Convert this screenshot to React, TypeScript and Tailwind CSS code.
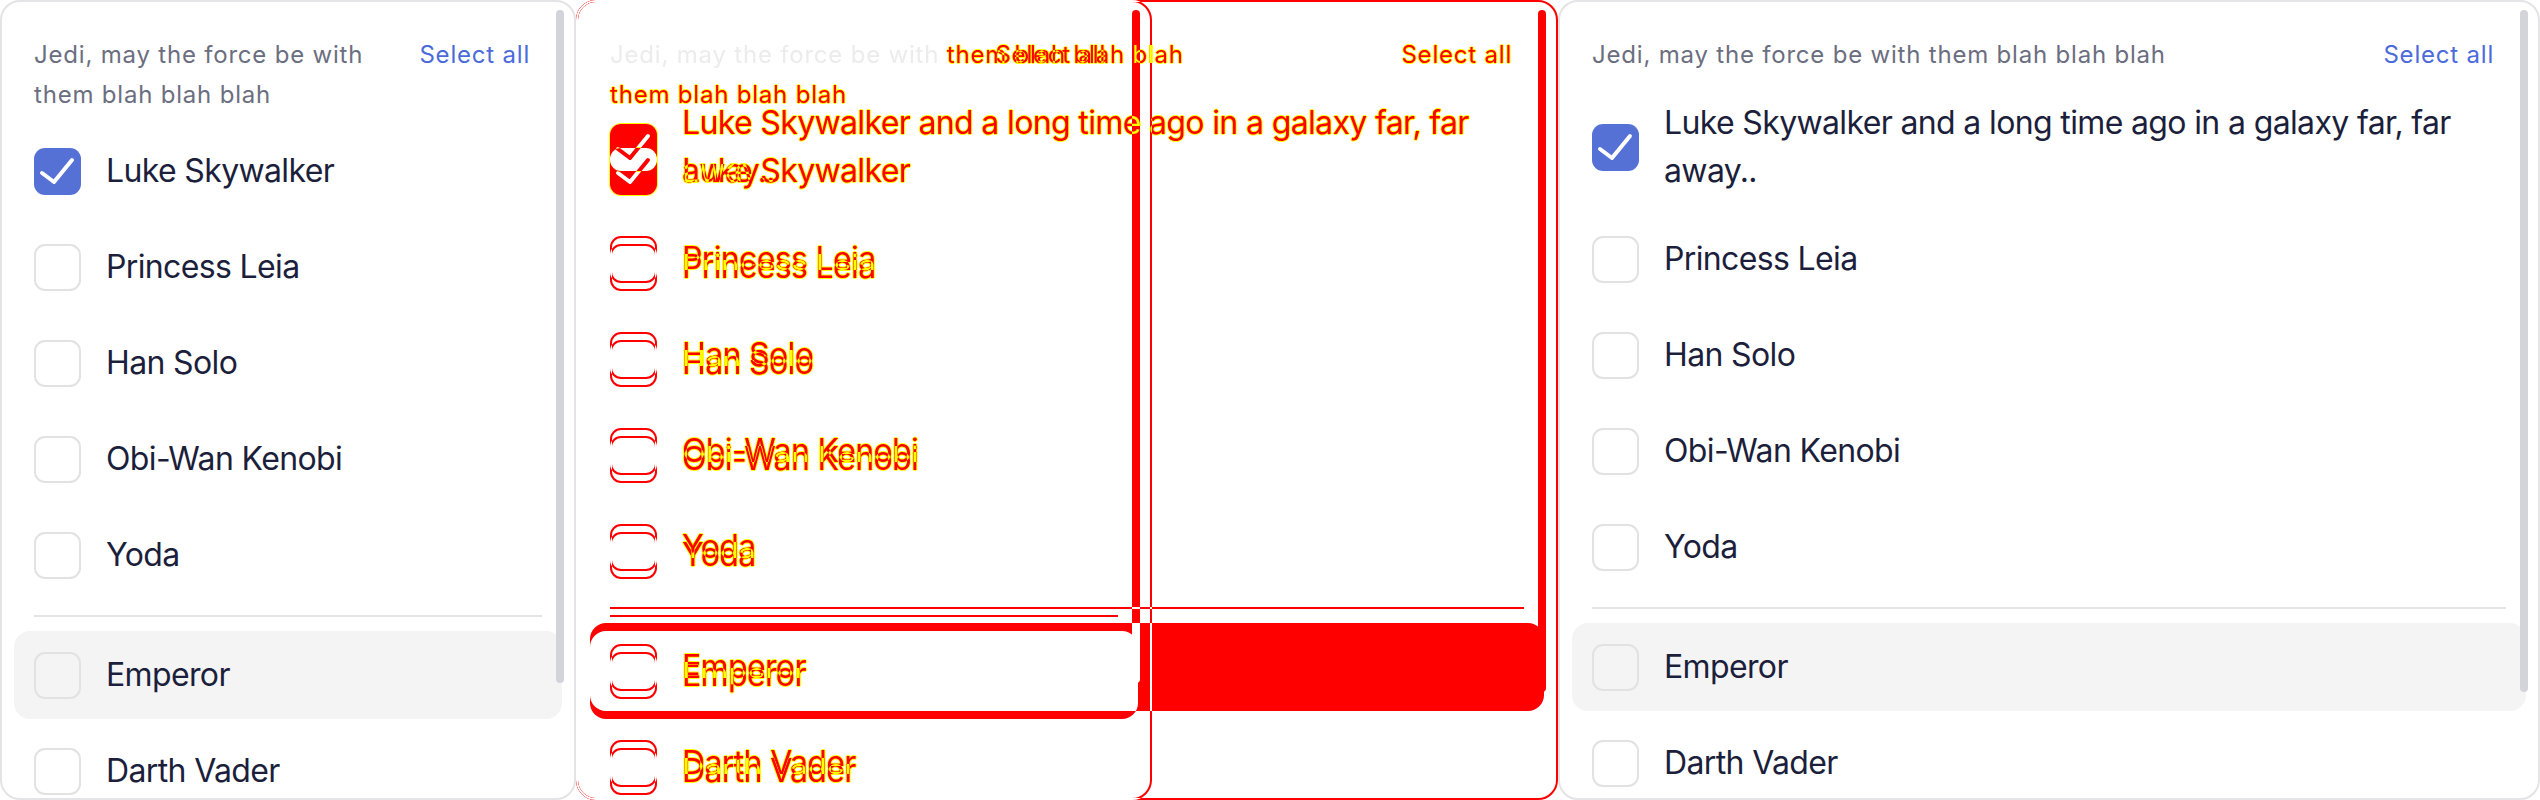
import React from "react";

type Variant = "expected" | "actual";
// normal = plain screenshot; shapes, glyphs and halo are the passes of the diff image
type Mode = "normal" | "shapes" | "glyphs" | "halo";

const crew = ["Princess Leia", "Han Solo", "Obi-Wan Kenobi", "Yoda"];

// yellow anti-alias rim the diff tool paints round changed glyphs
const glow =
  "[text-shadow:1px_0_0_#ffff00,-1px_0_0_#ffff00,0_1px_0_#ffff00,0_-1px_0_#ffff00]";

function textFor(mode: Mode, normal: string) {
  if (mode === "normal") return normal;
  if (mode === "glyphs") return "text-[#00ffff]";
  if (mode === "halo") return `text-transparent ${glow}`;
  return "text-transparent";
}

function CheckMark({ color }: { color: string }) {
  return (
    <svg viewBox="0 0 47 47" className="absolute inset-0 h-full w-full" fill="none">
      <path
        d="M8 25L20 34L38 12"
        stroke={color}
        strokeWidth={4}
        strokeLinecap="round"
        strokeLinejoin="round"
      />
    </svg>
  );
}

function Box({ checked, mode, onFill }: { checked?: boolean; mode: Mode; onFill?: boolean }) {
  if (checked) {
    if (mode === "glyphs") return <span className="block h-[47px] w-[47px] shrink-0" />;
    if (mode === "halo")
      return (
        <span className="block h-[47px] w-[47px] shrink-0 rounded-[11px] shadow-[0_0_0_1px_#ffff00]" />
      );
    return (
      <span
        className={`relative block h-[47px] w-[47px] shrink-0 rounded-[11px] ${
          mode === "shapes" ? "bg-[#00ffff]" : "bg-[#5571d6]"
        }`}
      >
        <CheckMark color={mode === "shapes" ? "#000000" : "#ffffff"} />
      </span>
    );
  }
  let border = "border-[#e2e2e2]";
  if (mode === "shapes") border = onFill ? "border-black" : "border-[#00ffff]";
  if (mode === "glyphs" || mode === "halo") border = "border-transparent";
  return <span className={`block h-[47px] w-[47px] shrink-0 rounded-[11px] border-2 ${border}`} />;
}

function Row({
  children,
  checked,
  hovered,
  mode,
}: {
  children: React.ReactNode;
  checked?: boolean;
  hovered?: boolean;
  mode: Mode;
}) {
  let bg = "";
  if (hovered && mode === "normal") bg = "bg-[#f4f4f5]";
  if (hovered && mode === "shapes") bg = "bg-[#00ffff]";
  return (
    <div
      className={`mb-[8px] flex min-h-[88px] items-center gap-[25px] rounded-[16px] px-[20px] py-[12px] ${bg}`}
    >
      <Box checked={checked} mode={mode} onFill={hovered} />
      <span
        className={`whitespace-nowrap text-[32px] leading-[48px] tracking-[-0.02em] ${textFor(
          mode,
          "text-[#1c1f3b]"
        )}`}
      >
        {children}
      </span>
    </div>
  );
}

function Panel({ variant, mode = "normal" }: { variant: Variant; mode?: Mode }) {
  const wide = variant === "actual";

  // first header line is identical in both shots, so the diff shows it only faintly
  let sameText = "";
  if (mode === "glyphs") sameText = "text-transparent";
  if (mode === "halo") {
    sameText = wide ? "text-transparent [text-shadow:none]" : "text-[#ececec] [text-shadow:none]";
  }

  const frame =
    mode === "normal"
      ? "border-[#e4e4e7] bg-white"
      : mode === "shapes"
      ? "border-[#00ffff]"
      : "border-transparent";
  const line = mode === "normal" ? "bg-[#e4e4e7]" : mode === "shapes" ? "bg-[#00ffff]" : "";
  const thumb = mode === "normal" ? "bg-[#d3d4d9]" : mode === "shapes" ? "bg-[#00ffff]" : "";

  return (
    <div
      className={`relative h-[800px] shrink-0 overflow-hidden rounded-[20px] border-2 ${
        wide ? "w-[982px]" : "w-[576px]"
      } ${frame}`}
    >
      <div className="flex flex-col px-[12px]">
        <div className="mb-[12px] flex items-start justify-between gap-8 pl-[20px] pr-[32px] pt-[33px] text-[24px] leading-[40px] tracking-[0.8px]">
          <p className={`whitespace-nowrap ${textFor(mode, "text-[#6b6e80]")}`}>
            <span className={sameText}>Jedi, may the force be with</span>
            {wide ? " them blah blah blah" : <><br />them blah blah blah</>}
          </p>
          <button className={`shrink-0 whitespace-nowrap ${textFor(mode, "text-[#4b6bdb]")}`}>
            Select all
          </button>
        </div>

        <Row checked mode={mode}>
          {wide ? (
            <>
              Luke Skywalker and a long time ago in a galaxy far, far
              <br />
              away..
            </>
          ) : (
            "Luke Skywalker"
          )}
        </Row>
        {crew.map((name) => (
          <Row key={name} mode={mode}>
            {name}
          </Row>
        ))}

        <div className={`mx-[20px] mb-[14px] mt-[8px] h-[2px] ${line}`} />

        <Row hovered mode={mode}>
          Emperor
        </Row>
        <Row mode={mode}>Darth Vader</Row>
      </div>

      {/* overlay scroll thumb */}
      <div
        className={`absolute right-[10px] top-[8px] w-[8px] rounded-full ${
          wide ? "h-[682px]" : "h-[673px]"
        } ${thumb}`}
      />
    </div>
  );
}

export default function App() {
  return (
    <div className="flex h-[800px] w-[2540px] overflow-hidden bg-white font-[Inter,'Noto_Sans',sans-serif]">
      <Panel variant="expected" />

      {/* diff image: cyan layers xor-ed by difference blending on white, rims laid over by multiply */}
      <div className="relative isolate h-[800px] w-[982px] shrink-0 overflow-hidden bg-white">
        <div className="absolute left-0 top-0 mix-blend-difference">
          <Panel variant="expected" mode="shapes" />
        </div>
        <div className="absolute left-0 top-0 mix-blend-difference">
          <Panel variant="actual" mode="shapes" />
        </div>
        <div className="absolute left-0 top-0 mix-blend-difference">
          <Panel variant="expected" mode="glyphs" />
        </div>
        <div className="absolute left-0 top-0 mix-blend-difference">
          <Panel variant="actual" mode="glyphs" />
        </div>
        <div className="absolute left-0 top-0 mix-blend-multiply">
          <Panel variant="expected" mode="halo" />
        </div>
        <div className="absolute left-0 top-0 mix-blend-multiply">
          <Panel variant="actual" mode="halo" />
        </div>
      </div>

      <Panel variant="actual" />
    </div>
  );
}
